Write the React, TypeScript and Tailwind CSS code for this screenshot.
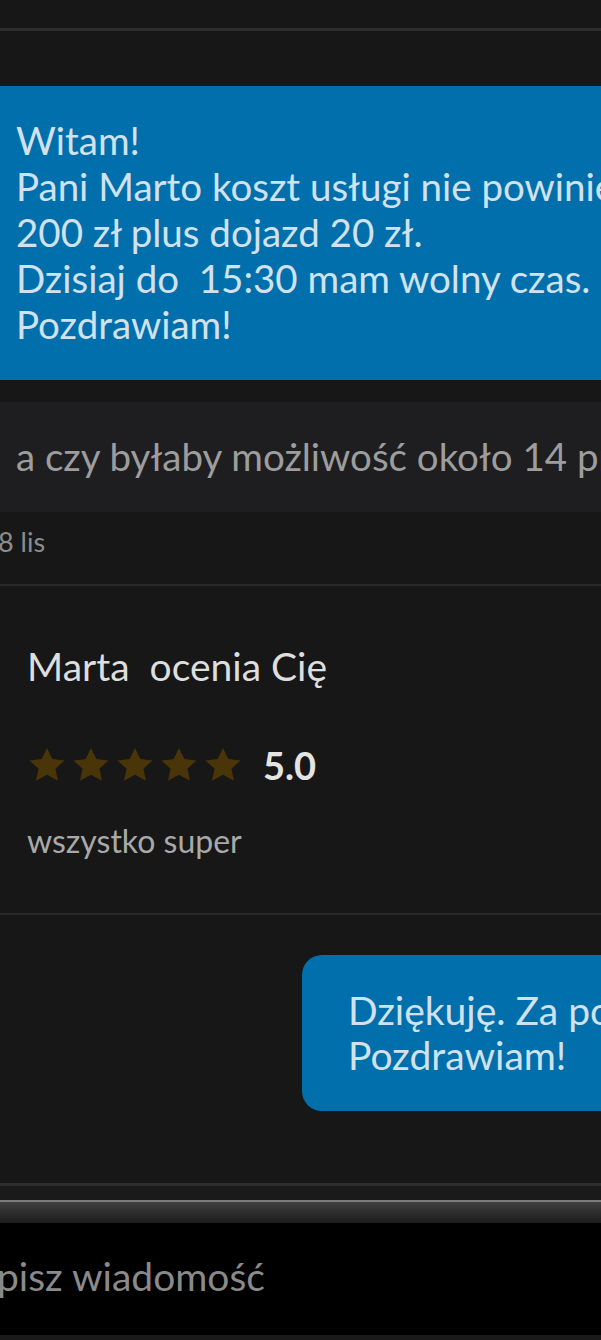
import React from "react";

const Star = () => (
  <svg width="38" height="36" viewBox="0 0 24 23" className="shrink-0">
    <path d="M12 0.6l3.4 7.1 7.8 0.9-5.8 5.3 1.6 7.7L12 17.7 5 21.6l1.6-7.7L0.8 8.6l7.8-0.9z" fill="#4a3509" />
  </svg>
);

export default function App() {
  return (
    <div
      className="w-[601px] h-[1340px] overflow-hidden bg-[#171717]"
      style={{ fontFamily: "Lato, 'Noto Sans', sans-serif" }}
    >
      <div className="h-[28px]" />
      <div className="h-[3px] bg-[#2e2e2e]" />
      <div className="h-[55px]" />

      <div className="h-[294px] bg-[#026fad] pl-4 pt-[31px] text-[38.5px] leading-[46px] text-[#d1e2ee] whitespace-pre overflow-hidden">
        <div>Witam!</div>
        <div>Pani Marto koszt usługi nie powinien przekroczyć</div>
        <div>200 zł plus dojazd 20 zł.</div>
        <div>{"Dzisiaj do  15:30 mam wolny czas."}</div>
        <div>Pozdrawiam!</div>
      </div>

      <div className="h-[22px]" />
      <div className="h-[110px] bg-[#1e1e20] flex items-center pl-4 whitespace-pre overflow-hidden">
        <span className="text-[38.5px] text-[#9d9d9d]">a czy byłaby możliwość około 14 przyjechać?</span>
      </div>

      <div className="h-[72px] pt-[14px]">
        <div className="ml-[-2px] text-[27px] leading-[32px] text-[#8c8c8c]">8 lis</div>
      </div>
      <div className="h-[2px] bg-[#282828]" />

      <div className="h-[327px] pl-[27px] pt-[58px]">
        <div className="text-[39px] leading-[44px] text-[#dedede] whitespace-pre">{"Marta  ocenia Cię"}</div>
        <div className="mt-[56px] flex items-center h-[42px]">
          <div className="flex gap-[6px] ml-[1px]">
            <Star />
            <Star />
            <Star />
            <Star />
            <Star />
          </div>
          <span className="ml-[21px] text-[38px] font-bold text-[#e4e4e4]">5.0</span>
        </div>
        <div className="mt-[37px] text-[32px] leading-[36px] text-[#a9a9a9]">wszystko super</div>
      </div>
      <div className="h-[2px] bg-[#282828]" />

      <div className="h-[40px]" />
      <div className="ml-[302px] h-[156px] bg-[#026fad] rounded-l-[20px] pl-[46px] pt-[33px] text-[39px] leading-[45px] text-[#d1e2ee] whitespace-pre overflow-hidden">
        <div>Dziękuję. Za porozumienie.</div>
        <div>Pozdrawiam!</div>
      </div>

      <div className="h-[72px]" />
      <div className="h-[3px] bg-[#2e2e2e]" />
      <div className="h-[14px] bg-[#1a1a1a]" />
      <div className="h-[2px] bg-[#7c7c7c]" />
      <div className="h-[21px] bg-gradient-to-b from-[#404040] to-[#1c1c1c]" />
      <div className="h-[112px] bg-black flex items-center pb-[6px]">
        <span className="ml-[-3px] text-[39px] text-[#8a8a8a]">pisz wiadomość</span>
      </div>
      <div className="h-[5px] bg-[#1a1a1a]" />
    </div>
  );
}
